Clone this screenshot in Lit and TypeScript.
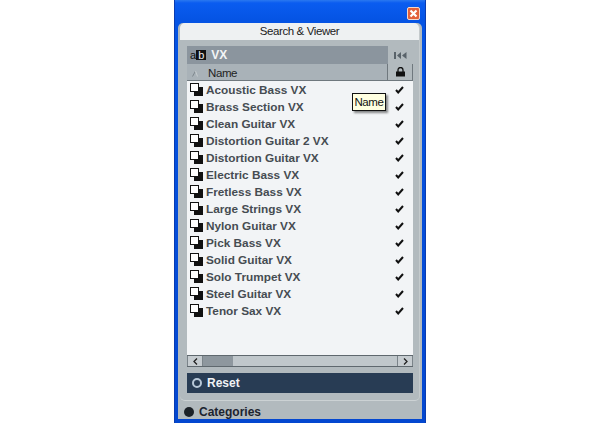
import { LitElement, html, css } from "lit";
import { customElement } from "lit/decorators.js";

const NAMES = ["Acoustic Bass VX","Brass Section VX","Clean Guitar VX","Distortion Guitar 2 VX","Distortion Guitar VX","Electric Bass VX","Fretless Bass VX","Large Strings VX","Nylon Guitar VX","Pick Bass VX","Solid Guitar VX","Solo Trumpet VX","Steel Guitar VX","Tenor Sax VX"];

@customElement("app-root")
export class AppRoot extends LitElement {
  static styles = css`
    :host { display: block; width: 600px; height: 423px; background: #fff; font-family: "Liberation Sans", Arial, sans-serif; overflow: hidden; }
    .page { display: flex; justify-content: center; height: 423px; }
    .win { position: relative; width: 252px; height: 423px; box-sizing: border-box; background: linear-gradient(#2a78f0, #0a5cf0 3px, #0554e4 20px, #0347d0); display: flex; flex-direction: column; padding: 0 4px 4px; border-left: 1px solid #0a3cb0; border-right: 1px solid #0a3cb0; }
    .titlebar { height: 23px; flex: none; display: flex; justify-content: flex-end; padding: 7px 1px 0 0; box-sizing: border-box; }
    .close { width: 13px; height: 13px; border-radius: 2px; background: #e2603a; border: 1px solid #f4d8c8; box-sizing: border-box; display: flex; }
    .body { flex: 1; background: #b2babe; border-radius: 5px 5px 0 0; display: flex; flex-direction: column; min-height: 0; margin: 0 -1px; }
    .inner { flex: 1; margin: 0 2px; border-radius: 5px; background: #b2babe; display: flex; flex-direction: column; border-bottom: 1px solid #ccd2d4; border-right: 1px solid #c4cacc; min-height: 0; }
    .head { height: 17px; flex: none; background: #eef1f2; border-radius: 5px 5px 0 0; text-align: center; font-size: 11.500px; letter-spacing: -0.4px; line-height: 17px; color: #222; }
    .content { flex: 1; padding: 6px 6px 7px 7px; display: flex; flex-direction: column; min-height: 0; }
    .search { display: flex; height: 18px; flex: none; }
    .sfield { width: 201px; background: #8b959e; display: flex; align-items: center; padding-left: 3px; box-sizing: border-box; gap: 5px; }
    .ab { font-size: 11px; line-height: 10px; color: #111; display: flex; }
    .ab b { background: #111; color: #eee; font-weight: normal; padding: 0 2px; }
    .vx { font-size: 12px; font-weight: bold; color: #f2f4f6; }
    .skip { width: 25px; display: flex; align-items: center; justify-content: center; }
    .cols { display: flex; height: 17px; flex: none; }
    .cname { width: 201px; background: #a9b2b8; border-right: 1px solid #6f787e; border-bottom: 1px solid #6f787e; box-sizing: border-box; display: flex; align-items: center; padding: 2px 0 0 5px; font-size: 11.500px; letter-spacing: -0.4px; color: #222; gap: 9px; }
    .clock { width: 25px; background: #b2babe; border-right: 1px solid #6f787e; border-bottom: 1px solid #6f787e; box-sizing: border-box; display: flex; align-items: center; justify-content: center; }
    .list { flex: 1; background: #f2f4f6; min-height: 0; }
    .row { height: 17px; display: flex; align-items: center; padding: 0 1px 0 3px; box-sizing: border-box; }
    .rname { font-size: 11.800px; font-weight: bold; color: #464c52; margin-left: 3px; flex: 1; white-space: nowrap; }
    .check { width: 26px; display: flex; justify-content: center; }
    .scroll { display: flex; flex: none; background: #c0c7cb; border-top: 1px solid #5f686e; border-bottom: 1px solid #5f686e; box-sizing: border-box; height: 12px; }
    .sbtn { width: 16px; flex: none; background: #c6ccd0; border-left: 1px solid #7b848a; border-right: 1px solid #7b848a; box-sizing: border-box; display: flex; align-items: center; justify-content: center; }
    .thumb { width: 30px; flex: none; background: #8e979e; }
    .track { flex: 1; }
    .reset { height: 20px; flex: none; margin-top: 6px; background: #283c54; display: flex; align-items: center; padding-left: 5px; gap: 5px; font-size: 12px; font-weight: bold; color: #f0f2f4; }
    .ring { width: 10px; height: 10px; box-sizing: border-box; border: 2px solid #b8c8d8; border-radius: 50%; }
    .cat { height: 18px; padding: 3px 0 0 6px; box-sizing: border-box; flex: none; display: flex; align-items: center; gap: 5px; font-size: 12px; font-weight: bold; color: #1c2430; }
    .dot { width: 10px; height: 10px; border-radius: 50%; background: #1c2228; }
    .tip { position: absolute; left: 177px; top: 93px; width: 34px; height: 18px; box-sizing: border-box; background: #ffffe1; border: 1px solid #111; font-size: 11.500px; letter-spacing: -0.4px; line-height: 16px; text-align: center; color: #111; box-shadow: 2px 2px 2px rgba(0,0,0,.45); }
  `;

  render() {
    return html`<div class="page"><div class="win">
      <div class="titlebar"><div class="close"><svg width="11" height="11" viewBox="0 0 11 11"><path d="M2.500 2.500l6 6M8.500 2.500l-6 6" stroke="#fff" stroke-width="2.200"/></svg></div></div>
      <div class="body"><div class="inner">
        <div class="head">Search &amp; Viewer</div>
        <div class="content">
          <div class="search">
            <div class="sfield"><span class="ab">a<b>b</b></span><span class="vx">VX</span></div>
            <div class="skip"><svg width="13" height="7" viewBox="0 0 13 7"><path d="M0 0h2v7H0zM7 0v7L3 3.500zM12.500 0v7L8 3.500z" fill="#59636a"/></svg></div>
          </div>
          <div class="cols">
            <div class="cname"><svg width="7" height="7" viewBox="0 0 7 7"><path d="M0.500 6.500L3.500 1" stroke="#7d868c" fill="none"/><path d="M3.500 1L5.500 6.500" stroke="#c7cdd0" fill="none"/></svg><span>Name</span></div>
            <div class="clock"><svg width="11" height="10" viewBox="0 0 11 10"><path d="M3 5V3a2.500 2.500 0 0 1 5 0v2" fill="none" stroke="#111" stroke-width="1.300"/><rect x="1" y="4.500" width="9" height="5" fill="#111"/></svg></div>
          </div>
          <div class="list">${NAMES.map(n => html`<div class="row">
            <svg width="13" height="13" viewBox="0 0 13 13"><rect x="4" y="4" width="9" height="9" fill="#111"/><rect x=".5" y=".5" width="8" height="8" fill="#fff" stroke="#111"/></svg>
            <span class="rname">${n}</span>
            <span class="check"><svg width="9" height="8" viewBox="0 0 9 8"><path d="M1 4l2.200 2.500L8 1" fill="none" stroke="#111" stroke-width="2"/></svg></span>
          </div>`)}</div>
          <div class="scroll">
            <div class="sbtn"><svg width="5" height="7" viewBox="0 0 5 7"><path d="M4 .5L1 3.500l3 3" fill="none" stroke="#222" stroke-width="1.300"/></svg></div>
            <div class="thumb"></div><div class="track"></div>
            <div class="sbtn"><svg width="5" height="7" viewBox="0 0 5 7"><path d="M1 .5l3 3-3 3" fill="none" stroke="#222" stroke-width="1.300"/></svg></div>
          </div>
          <div class="reset"><span class="ring"></span>Reset</div>
        </div>
      </div>
      <div class="cat"><span class="dot"></span>Categories</div>
      </div>
      <div class="tip">Name</div>
    </div></div>`;
  }
}
